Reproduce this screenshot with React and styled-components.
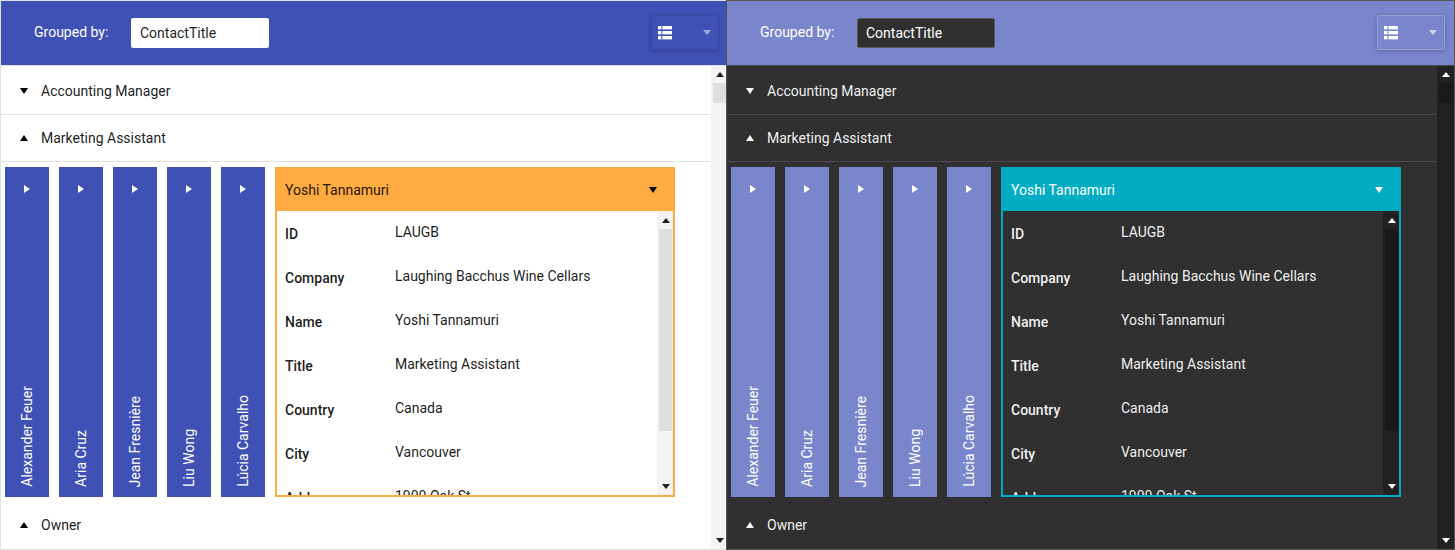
import React from 'react';
import styled, { ThemeProvider, createGlobalStyle, css } from 'styled-components';

const GlobalStyle = createGlobalStyle`
  html, body {
    margin: 0;
    padding: 0;
    overflow: hidden;
    background: #fff;
  }
  * {
    box-sizing: border-box;
  }
`;

const lightTheme = {
  panelBorder: '#e0e0e0',
  panelBg: '#ffffff',
  text: 'rgba(0, 0, 0, 0.9)',
  glyph: '#000000',
  scrollGlyph: '#222222',
  divider: '#e0e0e0',
  header: '#3f51b5',
  headerInset: 7,
  inputBg: '#ffffff',
  inputBorder: 'transparent',
  inputText: 'rgba(0, 0, 0, 0.9)',
  buttonBg: '#3f51b5',
  buttonBorder: 'rgba(0, 0, 0, 0.08)',
  buttonArrow: 'rgba(255, 255, 255, 0.5)',
  strip: '#3f51b5',
  accent: '#ffab40',
  accentText: 'rgba(0, 0, 0, 0.9)',
  accentGlyph: '#000000',
  track: '#f3f3f3',
  thumb: '#dedede',
};

const darkTheme = {
  panelBorder: '#555555',
  panelBg: '#303030',
  text: 'rgba(255, 255, 255, 0.95)',
  glyph: '#ffffff',
  scrollGlyph: '#ffffff',
  divider: '#4a4a4a',
  header: '#7986cb',
  headerInset: 9,
  inputBg: '#303030',
  inputBorder: 'rgba(255, 255, 255, 0.2)',
  inputText: '#ffffff',
  buttonBg: '#7986cb',
  buttonBorder: 'rgba(255, 255, 255, 0.2)',
  buttonArrow: 'rgba(255, 255, 255, 0.65)',
  strip: '#7986cb',
  accent: '#00acc1',
  accentText: '#ffffff',
  accentGlyph: '#ffffff',
  track: '#212121',
  thumb: '#191919',
};

const Page = styled.div`
  display: flex;
  width: 1455px;
  height: 550px;
  font-family: Roboto, 'Liberation Sans', sans-serif;
  font-size: 14px;
`;

const Panel = styled.div`
  display: flex;
  flex-direction: column;
  flex: 0 0 ${(p) => p.$width}px;
  height: 550px;
  overflow: hidden;
  background: ${(p) => p.theme.panelBg};
  color: ${(p) => p.theme.text};
  border: 1px solid ${(p) => p.theme.panelBorder};
  border-right-width: ${(p) => p.$rightEdge}px;
`;

const Header = styled.div`
  flex: 0 0 64px;
  display: flex;
  align-items: center;
  padding: 0 ${(p) => p.theme.headerInset}px 0 33px;
  background: ${(p) => p.theme.header};
`;

const GroupLabel = styled.span`
  width: 97px;
  margin-top: -2px;
  color: #ffffff;
`;

const GroupInput = styled.div`
  width: 138px;
  height: 30px;
  display: flex;
  align-items: center;
  padding-left: 8px;
  border-radius: 2px;
  border: 1px solid ${(p) => p.theme.inputBorder};
  background: ${(p) => p.theme.inputBg};
  color: ${(p) => p.theme.inputText};
`;

const ViewButton = styled.div`
  width: 68px;
  height: 35px;
  margin-left: auto;
  margin-top: -1px;
  display: flex;
  align-items: center;
  justify-content: space-between;
  padding: 0 7px 0 6px;
  background: ${(p) => p.theme.buttonBg};
  border: 1px solid ${(p) => p.theme.buttonBorder};
  border-radius: 2px;
  box-shadow: 0 1px 4px rgba(0, 0, 0, 0.25);
`;

const triangles = {
  up: css`
    border-left: ${(p) => p.$size}px solid transparent;
    border-right: ${(p) => p.$size}px solid transparent;
    border-bottom: ${(p) => p.$tall}px solid ${(p) => p.$color};
  `,
  down: css`
    border-left: ${(p) => p.$size}px solid transparent;
    border-right: ${(p) => p.$size}px solid transparent;
    border-top: ${(p) => p.$tall}px solid ${(p) => p.$color};
  `,
  right: css`
    border-top: ${(p) => p.$size}px solid transparent;
    border-bottom: ${(p) => p.$size}px solid transparent;
    border-left: ${(p) => p.$tall}px solid ${(p) => p.$color};
  `,
};

const Triangle = styled.span`
  display: block;
  flex: none;
  width: 0;
  height: 0;
  ${(p) => triangles[p.$dir]}
`;

const Body = styled.div`
  flex: 1;
  min-height: 0;
  display: flex;
  border-top: 1px solid ${(p) => p.theme.divider};
`;

const Groups = styled.div`
  flex: 1;
  min-width: 0;
  display: flex;
  flex-direction: column;
`;

const GroupRow = styled.div`
  flex: 0 0 ${(p) => p.$height}px;
  display: flex;
  align-items: center;
  gap: 13px;
  padding: ${(p) => p.$top}px 0 0 19px;
  margin-right: 1px;
  border-bottom: ${(p) => (p.$flat ? 'none' : `1px solid ${p.theme.divider}`)};
`;

const Tiles = styled.div`
  flex: 0 0 335px;
  display: flex;
  padding: 5px 0 0 4px;
`;

const Strip = styled.div`
  width: 44px;
  height: 330px;
  margin-right: 10px;
  display: flex;
  flex-direction: column;
  align-items: center;
  justify-content: space-between;
  padding: 18px 0 10px;
  background: ${(p) => p.theme.strip};
  color: #ffffff;
`;

const StripName = styled.span`
  writing-mode: vertical-rl;
  transform: rotate(180deg);
  line-height: 16px;
`;

const Detail = styled.div`
  width: 400px;
  height: 330px;
  display: flex;
  flex-direction: column;
  border: 2px solid ${(p) => p.theme.accent};
  border-top: none;
`;

const DetailHeader = styled.div`
  flex: 0 0 44px;
  margin: 0 -2px;
  display: flex;
  align-items: center;
  justify-content: space-between;
  padding: 1px 18px 0 10px;
  background: ${(p) => p.theme.accent};
  color: ${(p) => p.theme.accentText};
`;

const DetailBody = styled.div`
  flex: 1;
  min-height: 0;
  display: flex;
`;

const Fields = styled.div`
  flex: 1;
  min-width: 0;
  overflow: hidden;
`;

const Field = styled.div`
  height: 44px;
  display: flex;
  align-items: center;
  padding-left: 8px;
`;

const FieldName = styled.span`
  flex: 0 0 110px;
  padding-top: 1px;
  font-weight: 500;
`;

const FieldValue = styled.span`
  padding-bottom: 2px;
`;

const Scrollbar = styled.div`
  flex: 0 0 ${(p) => p.$width}px;
  overflow: hidden;
  background: ${(p) => p.theme.track};
`;

const ScrollInner = styled.div`
  width: 17px;
  height: 100%;
  display: flex;
  flex-direction: column;
`;

const ScrollCap = styled.div`
  flex: 0 0 ${(p) => p.$height}px;
  display: flex;
  align-items: center;
  justify-content: center;
`;

const ThumbTrack = styled.div`
  flex: 1;
  min-height: 0;
`;

const Thumb = styled.div`
  width: 13px;
  height: ${(p) => p.$height}px;
  margin-left: 2px;
  background: ${(p) => p.theme.thumb};
`;

const ListGlyph = () => (
  <svg width="14" height="14" viewBox="0 0 14 14" fill="#fff">
    <rect x="0" y="0" width="3.4" height="3.4" />
    <rect x="4.4" y="0" width="9.6" height="3.4" />
    <rect x="0" y="5" width="3.4" height="3.4" />
    <rect x="4.4" y="5" width="9.6" height="3.4" />
    <rect x="0" y="10" width="3.4" height="3.4" />
    <rect x="4.4" y="10" width="9.6" height="3.4" />
  </svg>
);

const people = ['Alexander Feuer', 'Aria Cruz', 'Jean Fresnière', 'Liu Wong', 'Lúcia Carvalho'];

const fields = [
  ['ID', 'LAUGB'],
  ['Company', 'Laughing Bacchus Wine Cellars'],
  ['Name', 'Yoshi Tannamuri'],
  ['Title', 'Marketing Assistant'],
  ['Country', 'Canada'],
  ['City', 'Vancouver'],
  ['Address', '1900 Oak St.'],
];

const ScrollColumn = ({ width, capHeight, thumbHeight, glyph }) => (
  <Scrollbar $width={width}>
    <ScrollInner>
      <ScrollCap $height={capHeight}>
        <Triangle $dir="up" $size={4} $tall={5} $color={glyph} />
      </ScrollCap>
      <ThumbTrack>
        <Thumb $height={thumbHeight} />
      </ThumbTrack>
      <ScrollCap $height={capHeight}>
        <Triangle $dir="down" $size={4} $tall={5} $color={glyph} />
      </ScrollCap>
    </ScrollInner>
  </Scrollbar>
);

const GroupedPanel = ({ theme, width, rightEdge, barWidth }) => (
  <ThemeProvider theme={theme}>
    <Panel $width={width} $rightEdge={rightEdge}>
      <Header>
        <GroupLabel>Grouped by:</GroupLabel>
        <GroupInput>ContactTitle</GroupInput>
        <ViewButton>
          <ListGlyph />
          <Triangle $dir="down" $size={4} $tall={5} $color={theme.buttonArrow} />
        </ViewButton>
      </Header>
      <Body>
        <Groups>
          <GroupRow $height={49} $top={2}>
            <Triangle $dir="down" $size={4} $tall={6} $color={theme.glyph} />
            Accounting Manager
          </GroupRow>
          <GroupRow $height={47} $top={0}>
            <Triangle $dir="up" $size={4} $tall={6} $color={theme.glyph} />
            Marketing Assistant
          </GroupRow>
          <Tiles>
            {people.map((name) => (
              <Strip key={name}>
                <Triangle $dir="right" $size={4} $tall={6} $color="#ffffff" />
                <StripName>{name}</StripName>
              </Strip>
            ))}
            <Detail>
              <DetailHeader>
                Yoshi Tannamuri
                <Triangle $dir="down" $size={4} $tall={6} $color={theme.accentGlyph} />
              </DetailHeader>
              <DetailBody>
                <Fields>
                  {fields.map(([name, value]) => (
                    <Field key={name}>
                      <FieldName>{name}</FieldName>
                      <FieldValue>{value}</FieldValue>
                    </Field>
                  ))}
                </Fields>
                <ScrollColumn width={16} capHeight={18} thumbHeight={202} glyph={theme.scrollGlyph} />
              </DetailBody>
            </Detail>
          </Tiles>
          <GroupRow $height={52} $top={4} $flat>
            <Triangle $dir="up" $size={4} $tall={6} $color={theme.glyph} />
            Owner
          </GroupRow>
        </Groups>
        <ScrollColumn width={barWidth} capHeight={17} thumbHeight={20} glyph={theme.scrollGlyph} />
      </Body>
    </Panel>
  </ThemeProvider>
);

const App = () => (
  <Page>
    <GlobalStyle />
    <GroupedPanel theme={lightTheme} width={726} rightEdge={0} barWidth={15} />
    <GroupedPanel theme={darkTheme} width={729} rightEdge={1} barWidth={17} />
  </Page>
);

export default App;
